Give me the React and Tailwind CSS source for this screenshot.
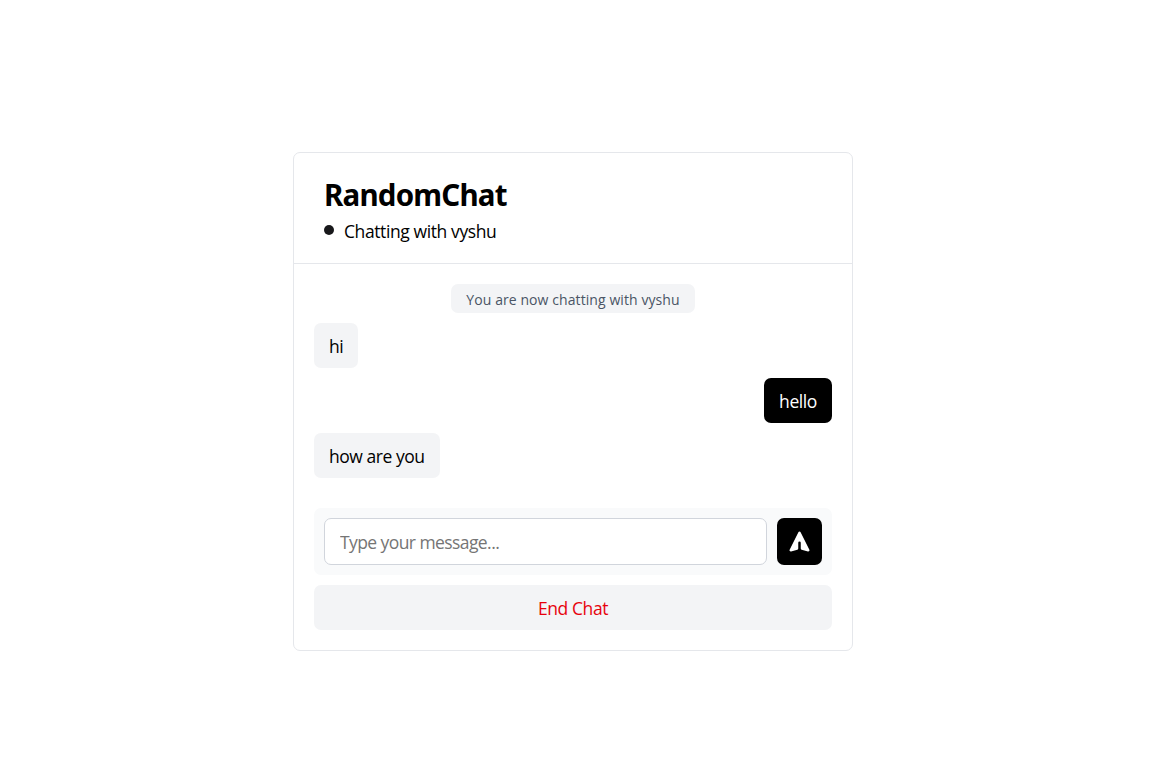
import React, { useState } from "react";

const initialMessages = [
  { id: 1, from: "system", text: "You are now chatting with vyshu" },
  { id: 2, from: "partner", text: "hi" },
  { id: 3, from: "me", text: "hello" },
  { id: 4, from: "partner", text: "how are you" },
];

function SendIcon() {
  return (
    <svg className="h-[25px] w-[25px]" viewBox="0 0 20 20" fill="currentColor">
      <path d="M10.894 2.553a1 1 0 00-1.788 0l-7 14a1 1 0 001.169 1.409l5-1.429A1 1 0 009 15.571V11a1 1 0 112 0v4.571a1 1 0 00.725.962l5 1.428a1 1 0 001.17-1.408l-7-14z" />
    </svg>
  );
}

function Message({ from, text }) {
  if (from === "system") {
    return (
      <div className="flex h-[29px] w-[244px] items-center justify-center self-center rounded-[7px] bg-gray-100 pt-0.5 text-[14px] whitespace-nowrap text-gray-600">
        <span className="tracking-[0.08px]">{text}</span>
      </div>
    );
  }
  return (
    <div
      className={`flex h-[45px] items-center rounded-[7px] px-[15px] pt-0.5 whitespace-nowrap ${
        from === "me" ? "self-end bg-black text-white" : "self-start bg-gray-100 tracking-[-0.46px] text-black"
      }`}
    >
      {text}
    </div>
  );
}

function App() {
  const [messages, setMessages] = useState(initialMessages);
  const [draft, setDraft] = useState("");

  const handleSend = (e) => {
    e.preventDefault();
    if (!draft.trim()) return;
    setMessages([...messages, { id: messages.length + 1, from: "me", text: draft }]);
    setDraft("");
  };

  return (
    <div className="min-h-screen bg-white pt-[152px] pl-[293px] font-['Open_Sans','Noto_Sans',sans-serif] text-[17.5px] leading-[25px] tracking-[-0.4px] text-black">
      <div className="w-[560px] rounded-[7px] border border-gray-200">
        <div className="h-[111px] border-b border-gray-200 px-[30px] pt-[22px]">
          <h1 className="font-['Noto_Sans',sans-serif] text-[29.5px] leading-10 font-bold tracking-[-0.8px]">RandomChat</h1>
          <div className="mt-1 flex items-center gap-2.5">
            <span className="mb-[3px] h-2.5 w-2.5 rounded-full bg-[#18181b]" />
            <span>Chatting with vyshu</span>
          </div>
        </div>

        <div className="p-5">
          <div className="flex flex-col gap-2.5">
            {messages.map((m) => (
              <Message key={m.id} from={m.from} text={m.text} />
            ))}
          </div>

          <form onSubmit={handleSend} className="mt-[30px] flex gap-2.5 rounded-[7px] bg-gray-50 p-2.5">
            <input
              value={draft}
              onChange={(e) => setDraft(e.target.value)}
              placeholder="Type your message..."
              className="h-[47px] min-w-0 flex-1 rounded-[7px] border border-gray-300 bg-white px-[15px] tracking-[-0.58px] outline-none placeholder:text-[#757575]"
            />
            <button type="submit" className="flex h-[47px] w-[45px] items-center justify-center rounded-[7px] bg-black text-white">
              <SendIcon />
            </button>
          </form>

          <button type="button" className="mt-2.5 block h-[45px] w-full rounded-[7px] bg-gray-100 pt-0.5 text-red-600">
            End Chat
          </button>
        </div>
      </div>
    </div>
  );
}

export default App;
